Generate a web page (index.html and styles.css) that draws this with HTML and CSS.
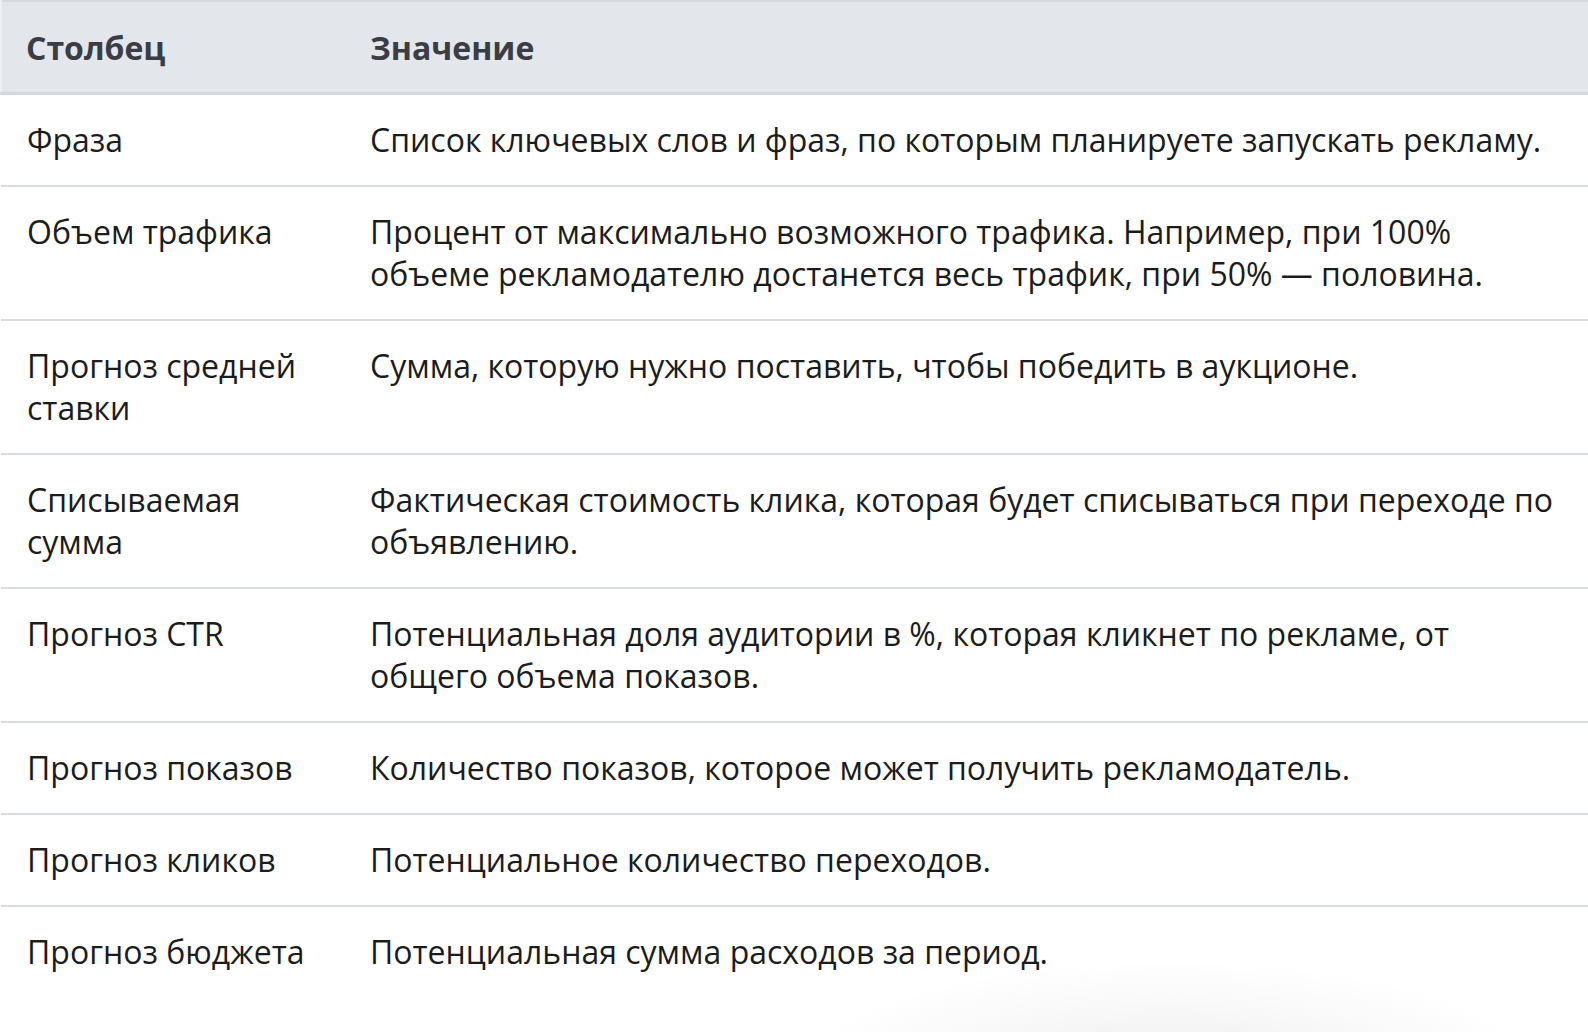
FILE: index.html
```html
<!DOCTYPE html>
<html lang="ru">
<head>
<meta charset="utf-8">
<title>Столбцы</title>
<link rel="stylesheet" href="styles.css">
</head>
<body>
<table class="info">
  <colgroup>
    <col class="col-name">
    <col class="col-value">
  </colgroup>
  <thead>
    <tr>
      <th>Столбец</th>
      <th>Значение</th>
    </tr>
  </thead>
  <tbody>
    <tr>
      <td>Фраза</td>
      <td>Список ключевых слов и фраз, по которым планируете запускать рекламу.</td>
    </tr>
    <tr>
      <td>Объем трафика</td>
      <td>Процент от максимально возможного трафика. Например, при 100% объеме рекламодателю достанется весь трафик, при 50% — половина.</td>
    </tr>
    <tr>
      <td>Прогноз средней ставки</td>
      <td>Сумма, которую нужно поставить, чтобы победить в аукционе.</td>
    </tr>
    <tr>
      <td>Списываемая сумма</td>
      <td>Фактическая стоимость клика, которая будет списываться при переходе по объявлению.</td>
    </tr>
    <tr>
      <td>Прогноз CTR</td>
      <td>Потенциальная доля аудитории в %, которая кликнет по рекламе, от общего объема показов.</td>
    </tr>
    <tr>
      <td>Прогноз показов</td>
      <td>Количество показов, которое может получить рекламодатель.</td>
    </tr>
    <tr>
      <td>Прогноз кликов</td>
      <td>Потенциальное количество переходов.</td>
    </tr>
    <tr>
      <td>Прогноз бюджета</td>
      <td>Потенциальная сумма расходов за период.</td>
    </tr>
  </tbody>
</table>
</body>
</html>
```

FILE: styles.css
```css
html {
  min-height: 100%;
  background-color: #ffffff;
  background-image: radial-gradient(ellipse 380px 120px at 1170px 1080px, rgba(0, 0, 0, 0.07), rgba(0, 0, 0, 0) 100%);
  background-repeat: no-repeat;
}

body {
  margin: 0;
  font-family: "Open Sans", "Noto Sans", sans-serif;
  font-size: 32px;
  line-height: 42px;
  color: #1c1c1c;
}

.info {
  width: 1588px;
  border-collapse: collapse;
  table-layout: fixed;
}

.col-name {
  width: 343px;
}

.info th,
.info td {
  text-align: left;
  vertical-align: top;
  padding: 24px 28px 24px 26px;
}

.info th + th,
.info td + td {
  padding-left: 26px;
}

.info thead tr {
  background: #e3e6ea;
  border-top: 2px solid #d5d8dc;
  border-bottom: 3px solid #d4d7db;
}

.info th {
  font-weight: 700;
  color: #3a3e44;
  padding-top: 25px;
  padding-bottom: 23px;
}

.info thead th:first-child {
  border-left: 2px solid #eef0f2;
  padding-left: 24px;
}

.info tbody tr {
  border-bottom: 2px solid #d9dce0;
}

.info tbody tr:last-child {
  border-bottom: none;
}
```
